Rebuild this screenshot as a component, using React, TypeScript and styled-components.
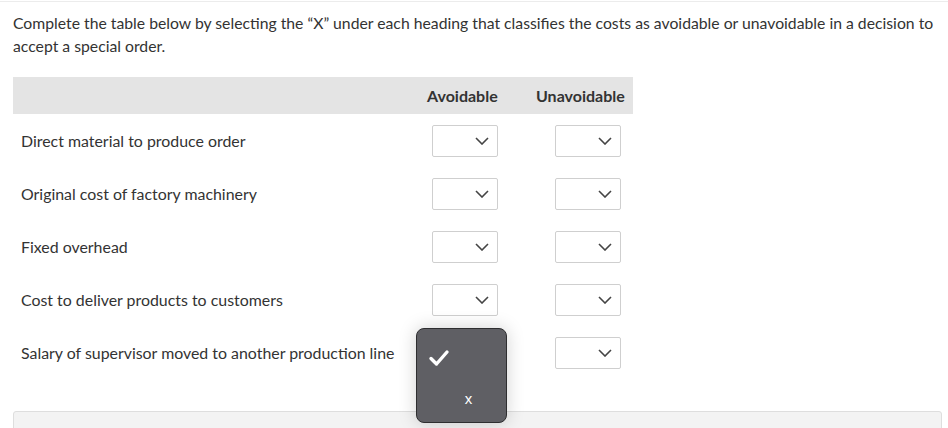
import React from "react";
import styled, { createGlobalStyle } from "styled-components";

const GlobalStyle = createGlobalStyle`
  body {
    margin: 0;
    background: #ffffff;
    font-family: Lato, "Open Sans", Arial, sans-serif;
    color: #333333;
  }
`;

const Page = styled.div`
  margin-top: 1px;
  border-top: 1px solid #ececec;
  padding: 9px 6px 0 13px;
  height: 417px;
  overflow: hidden;
`;

const Prompt = styled.p`
  margin: 0;
  font-size: 15.75px;
  line-height: 23px;
  color: #333333;
`;

const Table = styled.div`
  margin-top: 20px;
  width: 620px;
`;

const HeaderRow = styled.div`
  display: grid;
  grid-template-columns: 404px 101px 115px;
  align-items: center;
  height: 37px;
  background: #e4e4e4;
`;

const HeadCell = styled.div<{ $pad: number }>`
  font-weight: 700;
  font-size: 16px;
  padding-left: ${(p) => p.$pad}px;
  white-space: nowrap;
  color: #333333;
`;

const Row = styled.div`
  display: grid;
  grid-template-columns: 404px 101px 115px;
  align-items: center;
  height: 53px;
`;

const Label = styled.div`
  padding-left: 8px;
  font-size: 15.9px;
  color: #333333;
`;

const SelectCell = styled.div<{ $offset: number }>`
  position: relative;
  display: flex;
  justify-content: flex-start;
  padding-left: ${(p) => p.$offset}px;
`;

const Select = styled.div`
  width: 66px;
  height: 32px;
  box-sizing: border-box;
  border: 1px solid #cfcfcf;
  border-radius: 2px;
  background: #ffffff;
  display: flex;
  align-items: center;
  justify-content: flex-end;
  padding-right: 8px;
`;

const Menu = styled.div`
  position: absolute;
  left: -1px;
  top: -9px;
  width: 91px;
  height: 95px;
  box-sizing: border-box;
  background: #5f5f64;
  border: 1px solid #2e2e30;
  border-radius: 8px;
  box-shadow: 0 0 18px rgba(0, 0, 0, 0.18);
  z-index: 2;
`;

const MenuCheck = styled.div`
  position: absolute;
  left: 11px;
  top: 20px;
`;

const MenuItem = styled.div`
  position: absolute;
  left: 0;
  right: 0;
  top: 61px;
  text-align: center;
  padding-left: 14px;
  font-family: "Liberation Sans", Arial, sans-serif;
  font-size: 15px;
  color: #ffffff;
`;

const ResourceCard = styled.div`
  margin-top: 32px;
  height: 40px;
  background: #f3f3f3;
  border: 1px solid #dedede;
  border-radius: 3px;
  padding: 11px 0 0 25px;
  font-size: 16px;
  color: #333333;
`;

const Chevron = () => (
  <svg width="14" height="8" viewBox="0 0 14 8">
    <path d="M1 1 L7 7 L13 1" fill="none" stroke="#444" strokeWidth="1.6" />
  </svg>
);

const Check = () => (
  <svg width="22" height="18" viewBox="0 0 22 18">
    <path
      d="M3 9.5 L8.5 15 L19 3"
      fill="none"
      stroke="#ffffff"
      strokeWidth="3.4"
      strokeLinecap="round"
      strokeLinejoin="round"
    />
  </svg>
);

const rows = [
  "Direct material to produce order",
  "Original cost of factory machinery",
  "Fixed overhead",
  "Cost to deliver products to customers",
  "Salary of supervisor moved to another production line",
];

export default function App() {
  return (
    <>
      <GlobalStyle />
      <Page>
        <Prompt>
          Complete the table below by selecting the “X” under each heading that
          classifies the costs as avoidable or unavoidable in a decision to
          accept a special order.
        </Prompt>
        <Table>
          <HeaderRow>
            <div />
            <HeadCell $pad={10}>Avoidable</HeadCell>
            <HeadCell $pad={18}>Unavoidable</HeadCell>
          </HeaderRow>
          {rows.map((label, i) => (
            <Row key={label}>
              <Label>{label}</Label>
              <SelectCell $offset={15}>
                <Select>
                  <Chevron />
                </Select>
                {i === rows.length - 1 && (
                  <Menu>
                    <MenuCheck>
                      <Check />
                    </MenuCheck>
                    <MenuItem>x</MenuItem>
                  </Menu>
                )}
              </SelectCell>
              <SelectCell $offset={37}>
                <Select>
                  <Chevron />
                </Select>
              </SelectCell>
            </Row>
          ))}
        </Table>
        <ResourceCard>Textbook and Media</ResourceCard>
      </Page>
    </>
  );
}
